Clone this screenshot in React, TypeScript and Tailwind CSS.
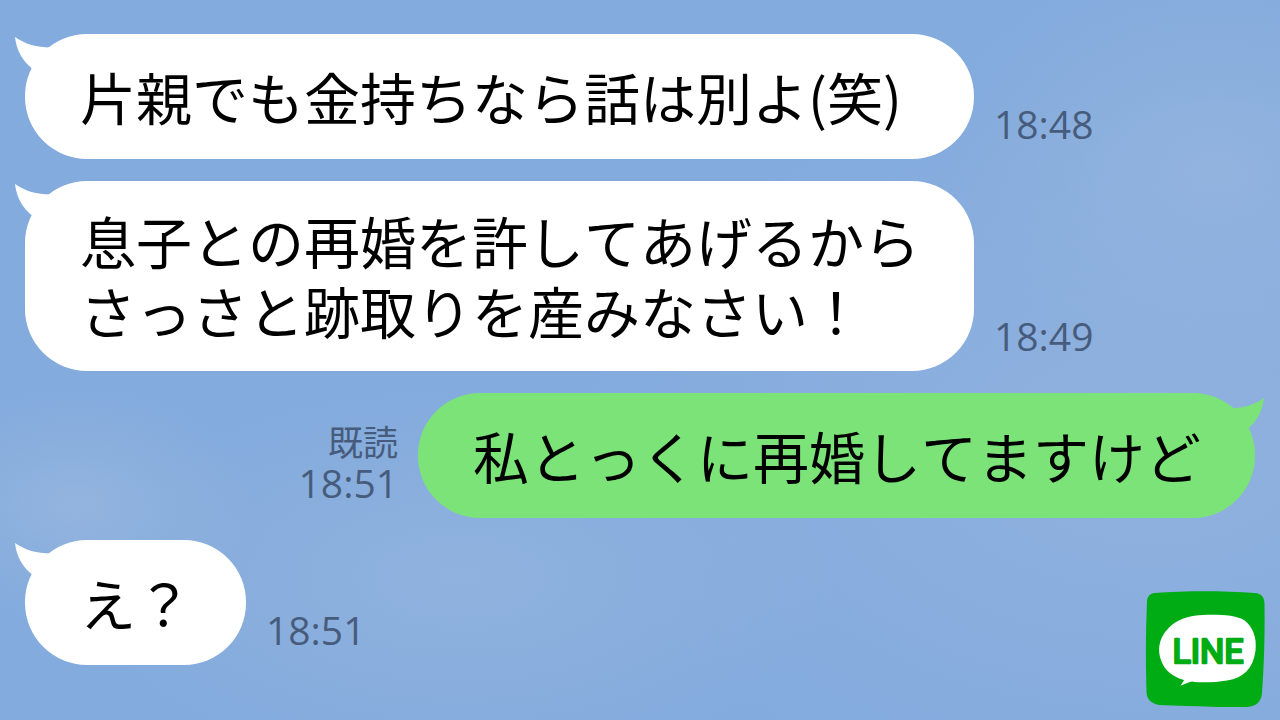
import clsx from "clsx";

type Message = {
  lines: string[];
  time: string;
  sent?: boolean;
  read?: boolean;
  wide?: boolean;
};

const messages: Message[] = [
  { lines: ["片親でも金持ちなら話は別よ(笑)"], time: "18:48", wide: true },
  {
    lines: ["息子との再婚を許してあげるから", "さっさと跡取りを産みなさい！"],
    time: "18:49",
    wide: true,
  },
  { lines: ["私とっくに再婚してますけど"], time: "18:51", sent: true, read: true },
  { lines: ["え？"], time: "18:51" },
];

function Tail({ sent }: { sent?: boolean }) {
  return (
    <svg
      aria-hidden="true"
      viewBox="0 0 44 40"
      className={clsx(
        "absolute h-[40px] w-[44px]",
        sent ? "top-[5px] -right-[9px] -scale-x-100 fill-[#7be378]" : "top-[3px] -left-[10px] fill-white",
      )}
    >
      <path d="M0 0C10 7 22 10.500 35.500 10.500L44 16L30 40L17 31.500C8 24 1.500 14 0 0Z" />
    </svg>
  );
}

function Row({ message }: { message: Message }) {
  const { lines, time, sent, read, wide } = message;
  return (
    <li className={clsx("flex items-end gap-5", sent && "flex-row-reverse")}>
      <div
        className={clsx(
          "relative flex min-h-[125px] flex-col justify-center rounded-[62px] pt-[24px] pr-[54px] pb-[26px] pl-[55px] text-[56px] leading-[70px] whitespace-nowrap text-black [font-kerning:none]",
          sent ? "bg-[#7be378]" : "bg-white",
          wide && "min-w-[949px]",
        )}
      >
        <Tail sent={sent} />
        {lines.map((line) => (
          <p key={line}>{line}</p>
        ))}
      </div>
      <div className={clsx("flex flex-col pb-[14px] text-[#475c7c]", sent && "items-end")}>
        {read && <span className="text-[35px] leading-[42px]">既読</span>}
        <time className="font-['Open_Sans','Noto_Sans',sans-serif] text-[39px] leading-[42px] font-medium">{time}</time>
      </div>
    </li>
  );
}

function LineLogo() {
  return (
    <svg
      role="img"
      aria-label="LINE"
      viewBox="0 0 120 118"
      className="absolute right-[15px] bottom-[13px] h-[118px] w-[120px]"
    >
      <path
        d="M10 3C40 .5 78 .5 110 3C116 3.500 119.500 7 119.500 14C120 46 119 76 117 103C116 112 112 116 102 117C74 117.500 44 116 14 115C5 113 2 109 1.500 102C.5 70 .8 40 2 11C2.500 6 5 3.500 10 3Z"
        fill="#00ac14"
      />
      <path
        d="M58 25C75 24.500 90 25 99 30C108 37 112 47 110.500 61C108 78 99 88 82 90.500C70 92.500 56 93 47 91.500C43 92 40 94.500 35.500 95.500C37 93.500 38.500 91.500 39 90C28 87 19 80 16 70C11 55 17 43 28 34C36 28 46 25.500 58 25Z"
        fill="#fff"
      />
      <text
        x="63"
        y="73"
        textAnchor="middle"
        fill="#00ac14"
        stroke="#00ac14"
        strokeWidth="2.5"
        strokeLinejoin="round"
        className="font-['Roboto',sans-serif] text-[34px]"
      >
        LINE
      </text>
    </svg>
  );
}

export default function App() {
  return (
    <main
      lang="ja"
      className="relative min-h-screen overflow-hidden bg-[#83abdd] bg-[radial-gradient(ellipse_22%_30%_at_95%_24%,#92b3de_0%,#92b3de00_100%),radial-gradient(ellipse_45%_50%_at_90%_62%,#90b1df_0%,#90b1df00_100%),radial-gradient(ellipse_14%_16%_at_6%_70%,#93b4de_0%,#93b4de00_100%),radial-gradient(ellipse_30%_26%_at_36%_80%,#90b2de_0%,#90b2de00_100%)] pt-[34px] pb-14 font-['Noto_Sans_CJK_JP',sans-serif]"
    >
      <ul className="flex flex-col gap-[22px] px-[25px]">
        {messages.map((message) => (
          <Row key={message.lines[0]} message={message} />
        ))}
      </ul>
      <LineLogo />
    </main>
  );
}
